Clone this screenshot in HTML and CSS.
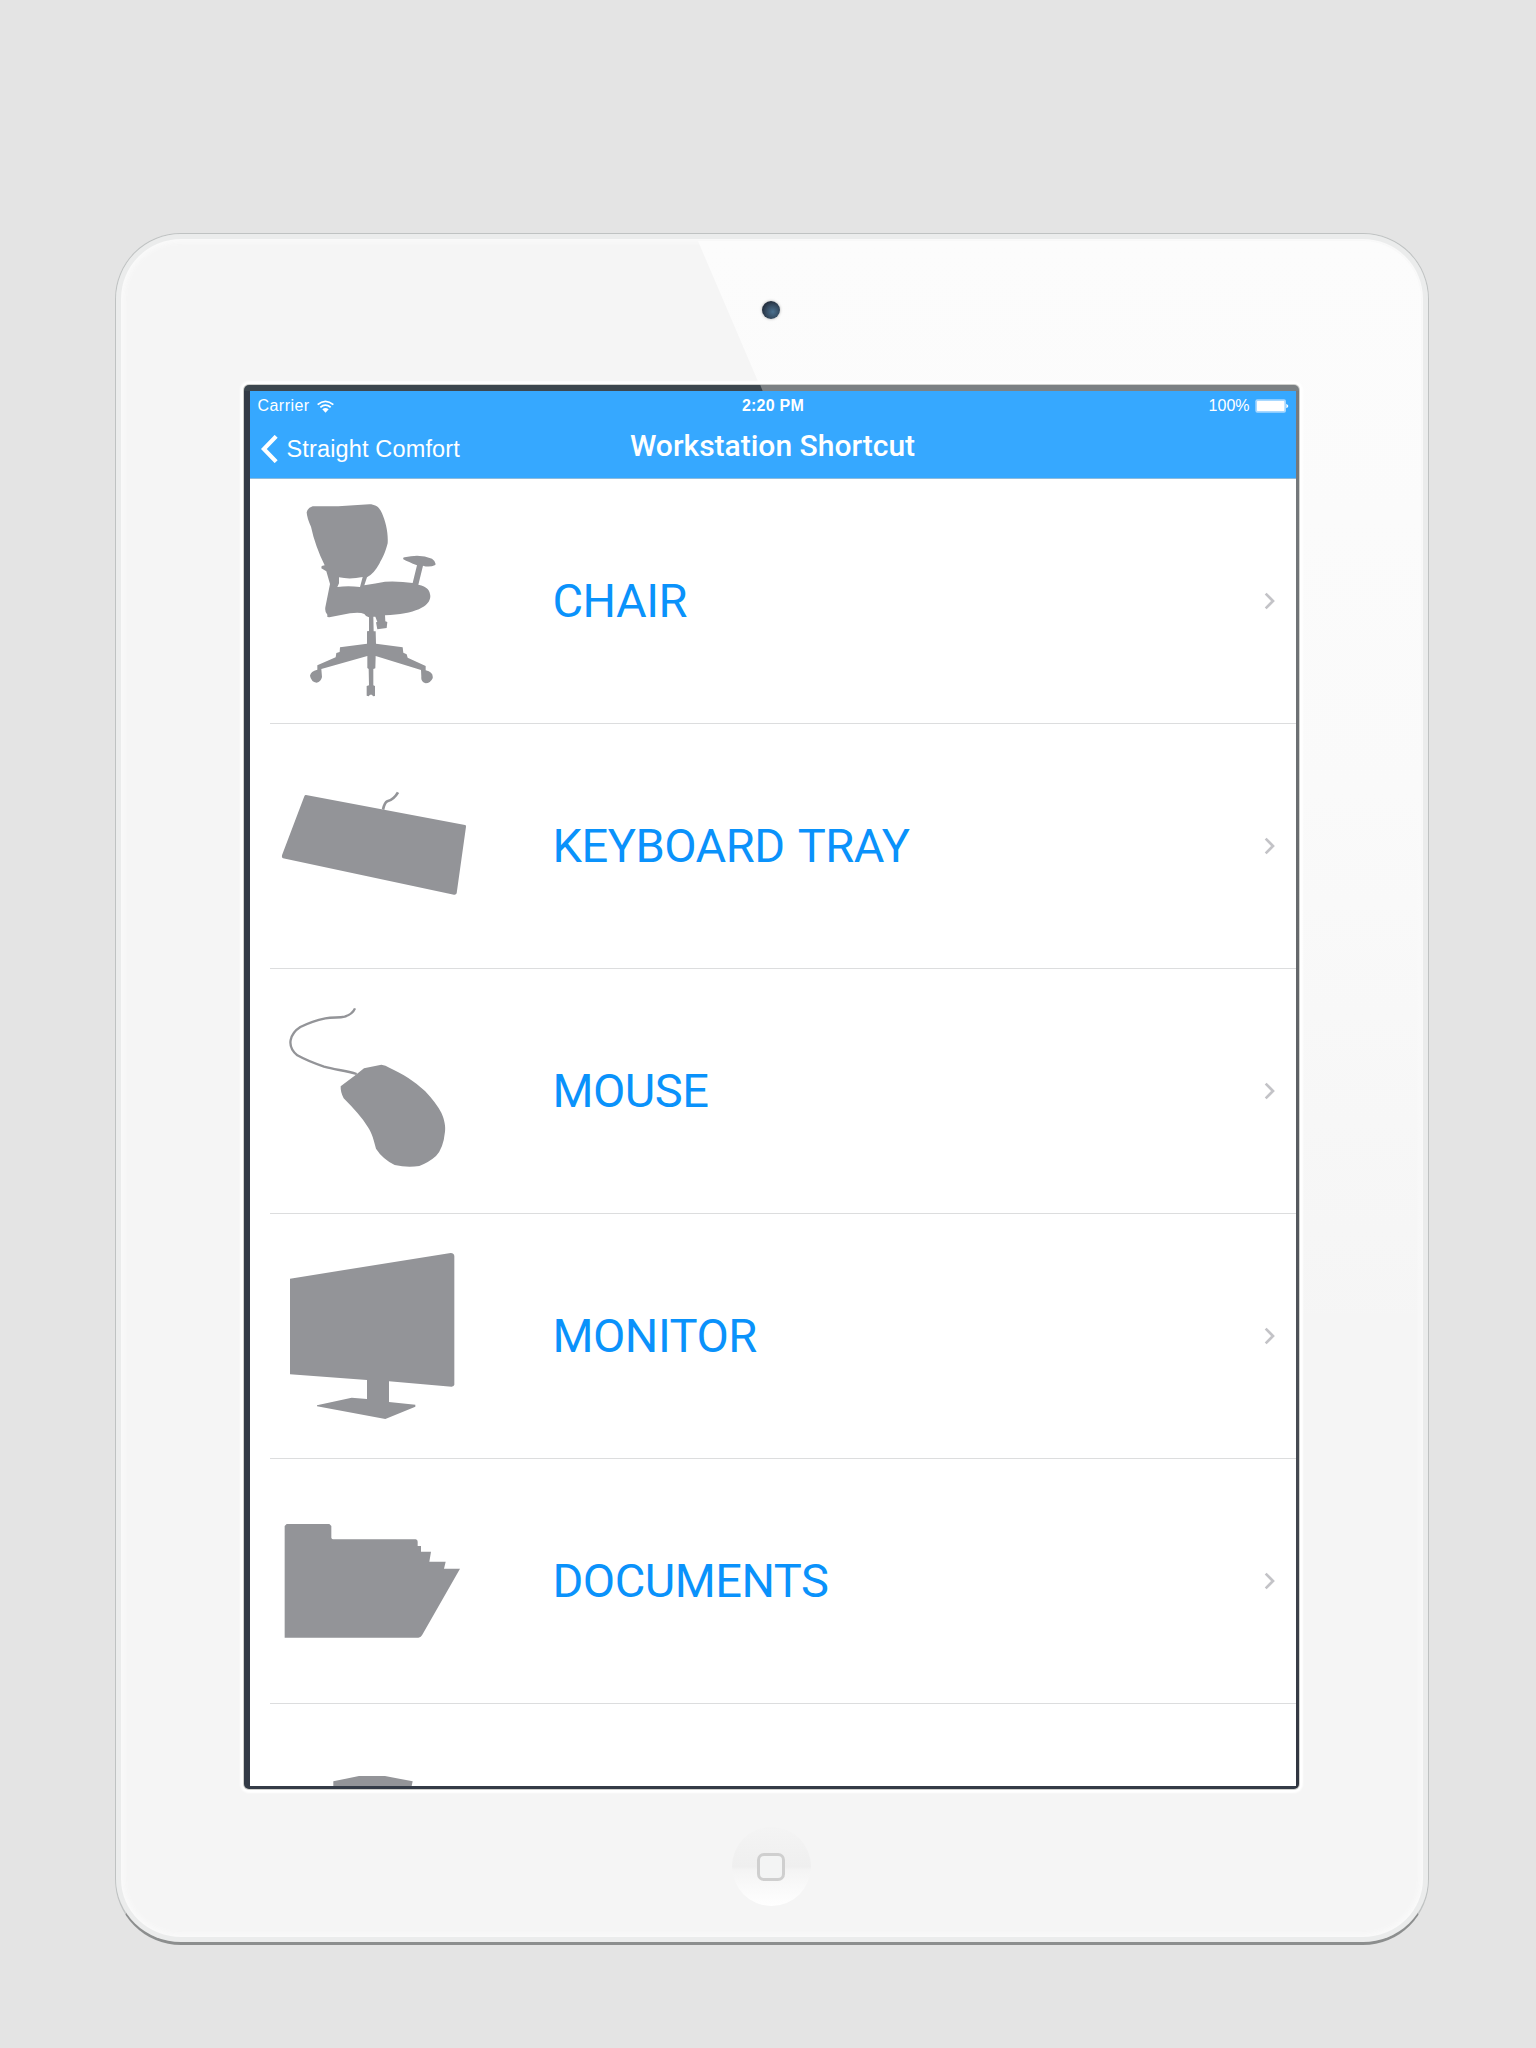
FILE: index.html
```html
<!DOCTYPE html>
<html lang="en">
<head>
<meta charset="utf-8">
<title>Workstation Shortcut</title>
<link rel="stylesheet" href="styles.css">
</head>
<body>
<main class="tablet">
  <div class="gloss"></div>
  <header class="top-bezel"><span class="camera"></span></header>
  <section class="screen">
    <div class="bar">
      <div class="status">
        <div class="carrier">
          <span class="carrier-name">Carrier</span>
          <svg class="wifi" viewBox="0 0 51 39">
            <path d="M2 14Q25-6 49 14M10 22Q25 9 41 22" fill="none" stroke="#fff" stroke-width="5.500"/>
            <path d="M16 28Q25 20 35 28L25.500 38z" fill="#fff"/>
          </svg>
        </div>
        <span class="time">2:20 PM</span>
        <div class="power">
          <span class="percent">100%</span>
          <svg class="battery" viewBox="0 0 102 42">
            <rect x="1" y="1" width="92" height="40" rx="6" fill="#a8d8ff"/>
            <rect x="6" y="6" width="82" height="30" rx="2" fill="#fff"/>
            <path d="M94 14q12 7 0 14z" fill="#fff"/>
          </svg>
        </div>
      </div>
      <nav class="nav">
        <a class="back"><svg class="back-icon" viewBox="0 0 50 84"><path d="M45 4L8 42L45 80" fill="none" stroke="#fff" stroke-width="12.500"/></svg><span class="back-label">Straight Comfort</span></a>
        <h1 class="title">Workstation Shortcut</h1>
        <span></span>
      </nav>
    </div>
    <ul class="list">
      <li class="row">
        <svg class="icon" viewBox="0 -33 660 735">
          <path d="M128 49L205 49L298 43C318 43 330 54 336 70C347 96 355 127 353 160C346 188 338 203 328 221C317 240 306 254 291 262L283 286Q318 280 345 275Q390 273 428 279L441 226Q415 216 400 208Q398 202 404 202Q450 191 486 206Q499 215 496 225Q478 233 459 227L445 284C472 289 480 302 481 318C481 350 435 372 345 376L346 394L352 396L350 414L322 418L318 397L322 396L316 380L310 380L311 424L317 424L318 461L398 472L400 488L410 493L413 503L467 528L467 541Q491 546 488 565Q481 580 467 580Q452 575 454 561L453 540L317 498L316 535L310 537L310 586L315 588L315 618L309 619L306 614L300 614L296 619L290 617L290 588L297 586L296 537L292 534L292 498L154 537L156 561Q153 575 140 578Q123 575 120 557Q122 543 142 539L142 526L197 502L199 489L209 486L210 472L291 461L291 424L297 423L297 382Q287 380 283 372Q270 366 240 370L178 382L172 381L172 374Q164 368 166 352L180 282L169 244L154 235L155 228L164 226C146 189 131 148 123 110Q111 85 110 67Q112 54 128 49zM207 262L207 280L202 291Q234 287 270 291L278 261Q240 269 207 262z" fill-rule="evenodd"/>
        </svg>
        <span class="label">CHAIR</span><svg class="chevron" viewBox="0 0 36 54"><path d="M5 5L27 27L5 49"/></svg>
      </li>
      <li class="row">
        <svg class="icon" viewBox="30 -138 660 735">
          <path d="M138 75L615 165Q619 166 618 170L590 370Q588 375 582 374L69 265Q64 263 66 256L133 79Q135 74 138 75z"/>
          <path class="cord" d="M369 119Q374 97 382 94Q402 88 414 67" stroke-width="8"/>
        </svg>
        <span class="label">KEYBOARD TRAY</span><svg class="chevron" viewBox="0 0 36 54"><path d="M5 5L27 27L5 49"/></svg>
      </li>
      <li class="row">
        <svg class="icon" viewBox="0 -63 660 735">
          <path d="M282 235L334 224Q347 226 358 233C400 252 432 273 465 303Q498 338 514 368C524 390 527 410 525 425Q520 475 498 498Q478 516 448 528Q412 534 374 525Q337 506 318 476C309 439 302 422 291 407Q270 374 221 325Q211 306 212 289L254 257z"/>
          <path class="cord" d="M260 252C227 241 197 240 162 230C130 219 107 210 82 196C63 180 59 166 62 150C66 131 75 121 91 111C113 100 137 91 166 85C190 80 206 85 224 80Q248 72 255 55" stroke-width="7"/>
        </svg>
        <span class="label">MOUSE</span><svg class="chevron" viewBox="0 0 36 54"><path d="M5 5L27 27L5 49"/></svg>
      </li>
      <li class="row">
        <svg class="icon" viewBox="0 -48 660 735">
          <path d="M60 146L542 69Q553 70 553 79V464Q552 469 545 470L357 454V516L436 524V530L346 567L141 529V526L245 503L291 507V450L60 433z"/>
        </svg>
        <span class="label">MONITOR</span><svg class="chevron" viewBox="0 0 36 54"><path d="M5 5L27 27L5 49"/></svg>
      </li>
      <li class="row">
        <svg class="icon" viewBox="120 -123 660 735">
          <path d="M170 72H298L304 78V113Q305 118 310 118H557Q563 119 563 125V138H573V155H603L598 185H647L642 206H690L576 406Q572 413 565 413H164V78z"/>
        </svg>
        <span class="label">DOCUMENTS</span><svg class="chevron" viewBox="0 0 36 54"><path d="M5 5L27 27L5 49"/></svg>
      </li>
      <li class="row row-partial">
        <svg class="icon" viewBox="120 612 660 246"><path d="M310 858V844L387 828H465L548 844L545 858z"/></svg>
      </li>
    </ul>
  </section>
  <footer class="bottom-bezel"><span class="home"><span class="home-mark"></span></span></footer>
</main>
</body>
</html>
```
FILE: styles.css
```css
* { box-sizing: border-box; }
body {
  margin: 0;
  height: 2048px;
  padding: 233px 0 0 115px;
  background: #e4e4e4;
  font-family: "Liberation Sans", Arial, sans-serif;
  overflow: hidden;
}
.tablet {
  position: relative;
  width: 1314px;
  height: 1712px;
  display: flex;
  flex-direction: column;
  align-items: center;
  padding-right: 1px;
  border: 1px solid #bfc2c2;
  border-bottom: 3px solid #8c8e8e;
  border-radius: 66px;
  background: #f5f5f5;
  box-shadow: inset 0 0 0 5px #ebecec, inset 0 0 5px 8px #fafafa;
}
.gloss {
  position: absolute;
  top: 7px;
  left: 582px;
  right: 7px;
  height: 1100px;
  border-top-right-radius: 58px;
  background: linear-gradient(#fcfcfc, #fafafa 50%, #f5f5f500);
  clip-path: polygon(0 0, 100% 0, 100% 100%, 470px 100%);
}
.top-bezel {
  height: 151px;
  width: 100%;
  display: flex;
  justify-content: center;
  padding: 67px 1px 0 0;
  z-index: 1;
}
.camera {
  width: 18px;
  height: 18px;
  border-radius: 50%;
  background: radial-gradient(circle at 60% 60%, #4b7190, #34495e 45%, #202a38 75%);
  box-shadow: 0 0 3px #aaa;
}
.screen {
  width: 1055px;
  height: 1404px;
  flex: none;
  display: flex;
  flex-direction: column;
  margin-right: 1px;
  padding: 6px 3px 3px 6px;
  border-radius: 5px;
  background:
    linear-gradient(68deg, #3d474f 49%, #7c8184 49.100%) top / 100% 6px no-repeat,
    linear-gradient(#777b7e, #66696c 40%, #303540) right / 4px 100% no-repeat,
    #343b47;
  box-shadow: 0 0 0 1px #cfd0cd, 0 0 2px 4px #fff;
  z-index: 1;
}
.bar {
  height: 88px;
  flex: none;
  background: #36a8ff;
  border-bottom: 1px solid #8fbbdc;
  color: #fff;
}
.status {
  height: 28px;
  padding: 1px 7px 0 8px;
  display: grid;
  grid-template-columns: 1fr auto 1fr;
  align-items: center;
  font-size: 16px;
  line-height: 28px;
}
.carrier, .power, .back { display: flex; align-items: center; }
.carrier { gap: 7px; }
.carrier-name { letter-spacing: 0.450px; }
.wifi { width: 17px; height: 13px; }
.time { font-weight: bold; letter-spacing: 0.250px; }
.power { justify-content: flex-end; gap: 5px; }
.battery { width: 34px; height: 14px; }
.nav {
  height: 59px;
  padding-left: 11px;
  padding-right: 11px;
  display: grid;
  grid-template-columns: 1fr auto 1fr;
  align-items: center;
}
.back { gap: 9px; padding-top: 1px; }
.back-icon { width: 17px; height: 28px; }
.back-label { font-size: 23.500px; line-height: 28px; letter-spacing: 0.150px; }
.title {
  margin: 0;
  padding-bottom: 6px;
  font: 500 30px/36px Roboto, sans-serif;
  letter-spacing: 0;
}
.list {
  margin: 0;
  padding: 0;
  list-style: none;
  flex: 1;
  overflow: hidden;
  background: #fff;
}
.row {
  height: 245px;
  margin-left: 20px;
  padding-right: 20px;
  display: flex;
  align-items: center;
  border-bottom: 1px solid #dcddde;
}
.row-partial { height: 82px; border: 0; }
.icon { width: 220px; height: 245px; flex: none; align-self: flex-start; fill: #939498; }
.row-partial .icon { height: 82px; }
.cord { fill: none; stroke: #939498; }
.label {
  flex: 1;
  padding-left: 63px;
  font: 400 47px/56px Roboto, sans-serif;
  letter-spacing: -0.500px;
  word-spacing: 3px;
  color: #0a92fb;
}
.chevron { width: 12px; height: 18px; fill: none; stroke: #c3c3c7; stroke-width: 8; }
.bottom-bezel { display: flex; justify-content: center; padding: 38px 1px 0 0; }
.home {
  width: 79px;
  height: 79px;
  display: flex;
  align-items: center;
  justify-content: center;
  border-radius: 50%;
  background: linear-gradient(#f4f4f4, #efefef 50%, #f4f4f4 55%, #fff);
}
.home-mark { width: 28px; height: 28px; border: 3px solid #cfcfcf; border-radius: 7px; background: #f3f4f4; }
```
